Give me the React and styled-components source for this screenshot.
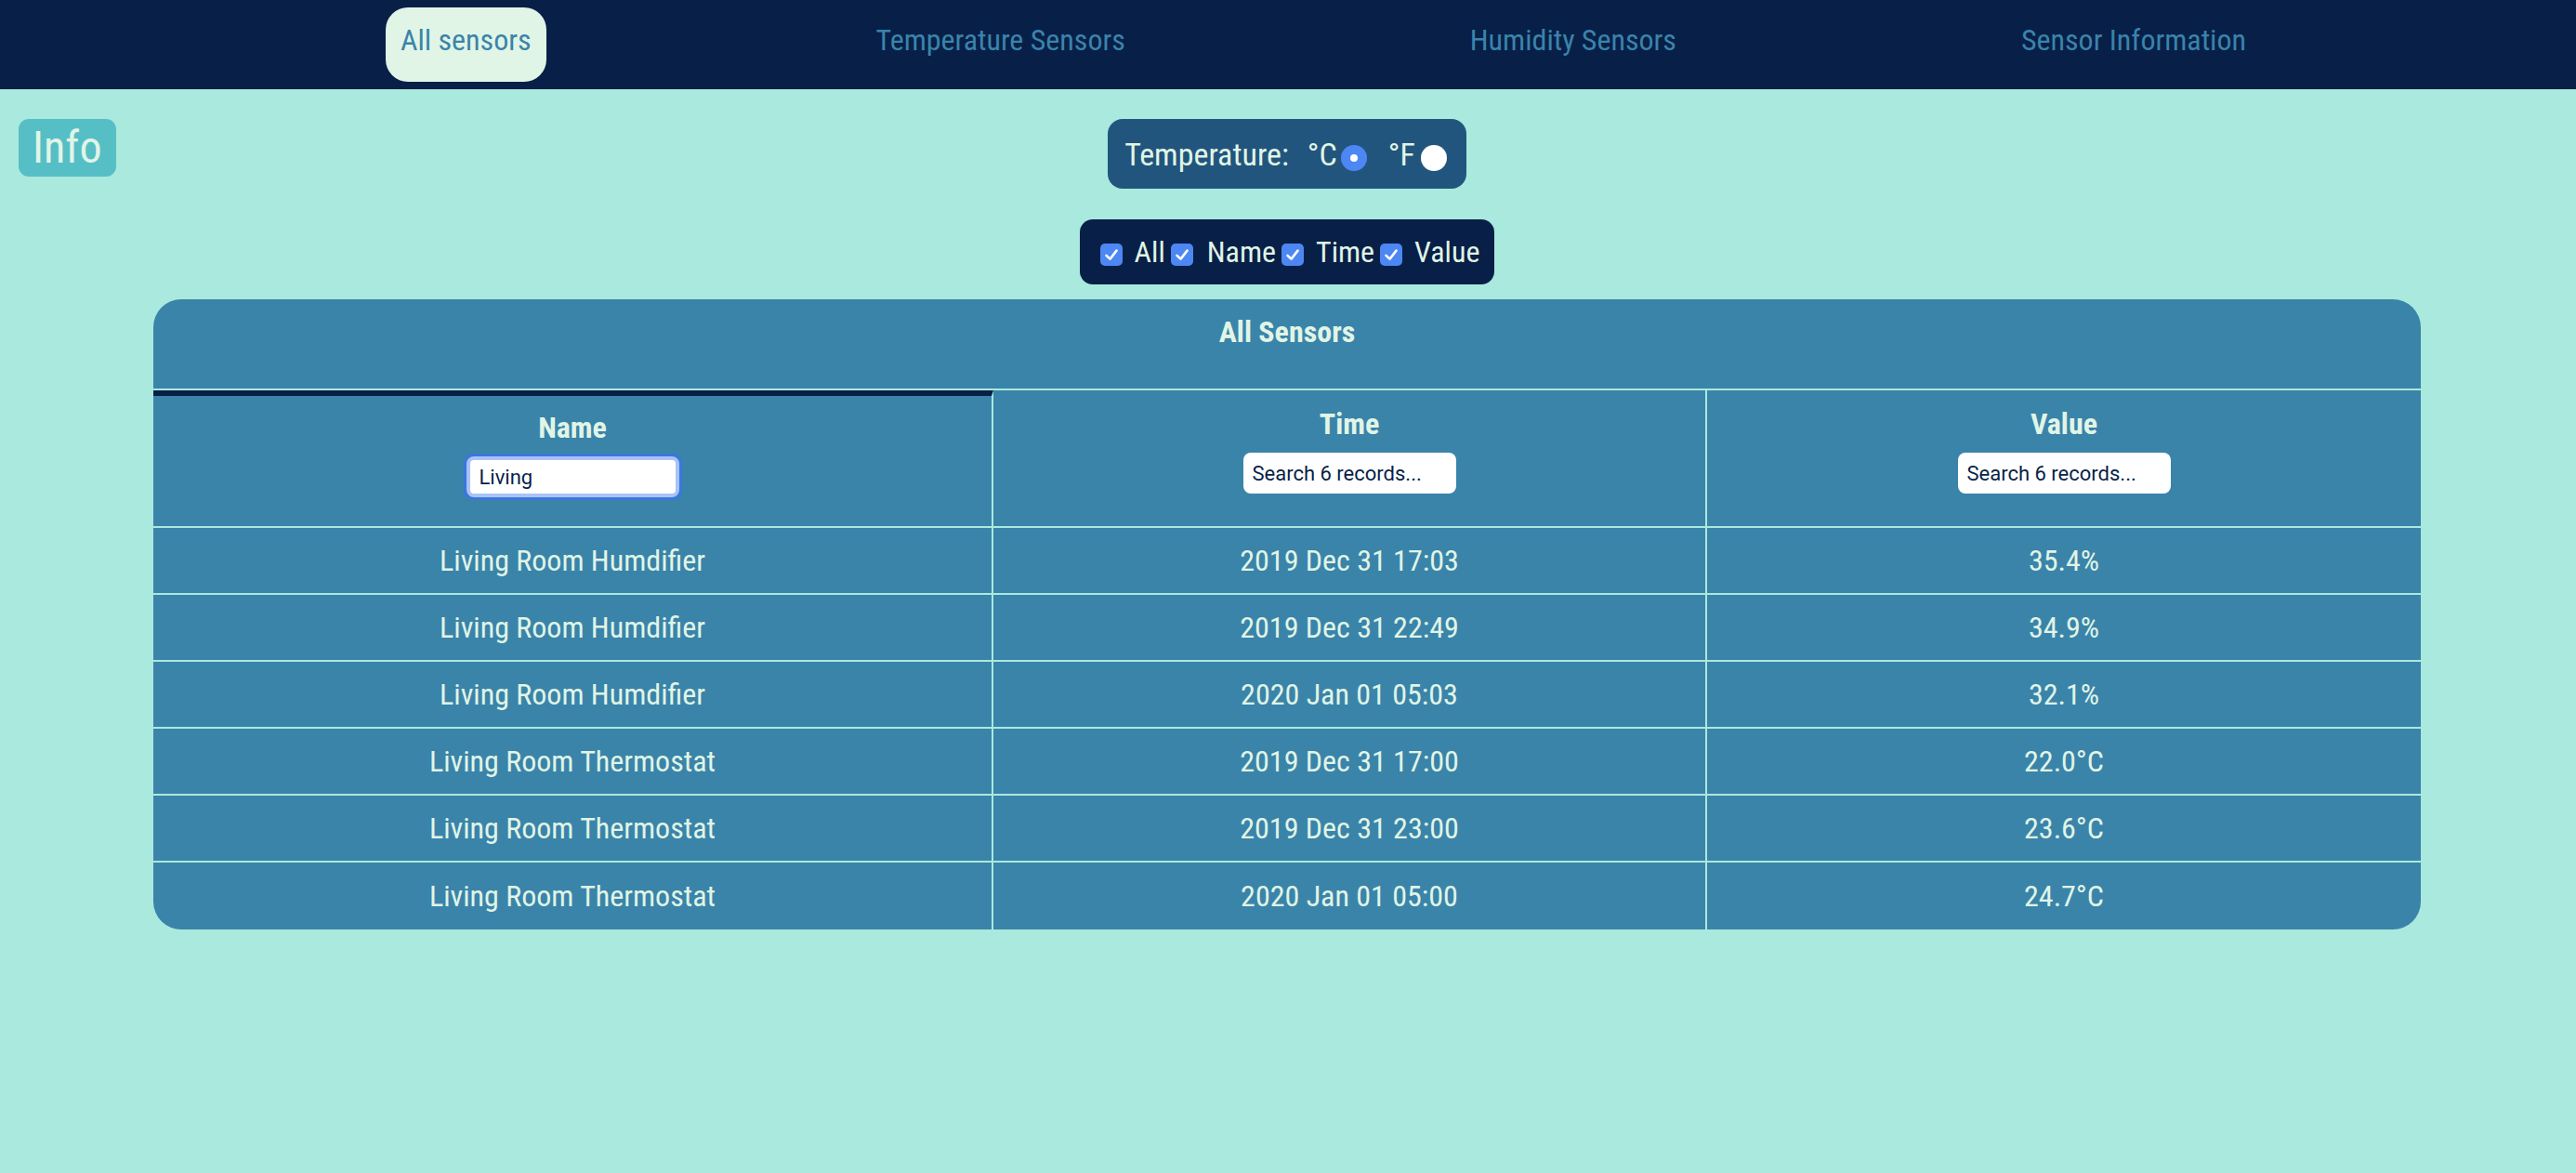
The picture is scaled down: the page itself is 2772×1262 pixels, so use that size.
import React from 'react';
import styled, { createGlobalStyle } from 'styled-components';

const GlobalStyle = createGlobalStyle`
  body {
    margin: 0;
    background-color: #aae9dd;
    font-family: "Roboto Condensed", "Roboto", sans-serif;
    font-stretch: condensed;
  }
  * {
    box-sizing: border-box;
  }
`;

const Page = styled.div`
  min-height: 100vh;
  background-color: #aae9dd;
  color: #e0f5e6;
`;

const NavBar = styled.nav`
  height: 96px;
  background-color: #081f48;
  display: flex;
  justify-content: space-evenly;
  align-items: flex-start;
  padding: 8px 0 0 76px;
`;

const NavItem = styled.a`
  padding: 17px 16px 27px;
  border-radius: 24px;
  font-size: 32px;
  line-height: 36px;
  color: #3a84aa;
  text-decoration: none;
  white-space: nowrap;
  background-color: ${(p) => (p.$active ? '#e0f5e6' : 'transparent')};
`;

const Main = styled.main`
  padding: 32px 20px 40px 18px;
`;

const Toolbar = styled.div`
  display: grid;
  grid-template-columns: 1fr auto 1fr;
  align-items: start;
`;

const InfoBadge = styled.button`
  justify-self: start;
  margin-left: 2px;
  border: none;
  border-radius: 11px;
  padding: 3px 15px;
  background-color: #56bfc6;
  color: #e0f5e6;
  font-family: inherit;
  font-stretch: condensed;
  font-size: 48px;
  font-weight: 400;
  line-height: 56px;
`;

const Controls = styled.div`
  display: flex;
  flex-direction: column;
  align-items: center;
  gap: 33px;
`;

const UnitBox = styled.div`
  display: flex;
  align-items: center;
  height: 75px;
  padding: 0 21px 0 18px;
  border-radius: 16px;
  background-color: #22557e;
  font-size: 34px;
`;

const UnitLabel = styled.span`
  margin-left: ${(p) => p.$gap || 0}px;
`;

const Radio = styled.span`
  width: 28px;
  height: 28px;
  margin: 9px 0 0 ${(p) => p.$gap}px;
  border-radius: 50%;
  background-color: ${(p) => (p.$checked ? '#4d87f3' : '#ffffff')};
  display: flex;
  align-items: center;
  justify-content: center;

  &::after {
    content: '';
    width: 8px;
    height: 8px;
    border-radius: 50%;
    background-color: #ffffff;
    display: ${(p) => (p.$checked ? 'block' : 'none')};
  }
`;

const ColumnBox = styled.div`
  display: flex;
  align-items: center;
  gap: 6px;
  height: 70px;
  padding: 0 16px 0 22px;
  border-radius: 14px;
  background-color: #081f48;
  font-size: 32px;
`;

const ColumnToggle = styled.label`
  display: flex;
  align-items: center;
`;

const CheckBox = styled.span`
  width: 24px;
  height: 24px;
  margin-top: 5px;
  border-radius: 5px;
  background-color: #4d87f3;
  display: flex;
  align-items: center;
  justify-content: center;
`;

const ToggleText = styled.span`
  padding-left: ${(p) => p.$gap}px;
`;

const TableCard = styled.section`
  width: 2440px;
  margin: 16px auto 0;
  border-radius: 30px;
  overflow: hidden;
  background-color: #3a84aa;
`;

const Caption = styled.div`
  height: 98px;
  padding-top: 16px;
  border-bottom: 2px solid #aae9dd;
  text-align: center;
  font-size: 32px;
  font-weight: 700;
  line-height: 38px;
`;

const Table = styled.table`
  width: 100%;
  table-layout: fixed;
  border-collapse: separate;
  border-spacing: 0;
`;

const HeadCell = styled.th`
  width: ${(p) => p.$width}px;
  vertical-align: top;
  padding: ${(p) => (p.$sorted ? '15px 0 31px' : '17px 0 35px')};
  border-top: ${(p) => (p.$sorted ? '6px solid #081f48' : 'none')};
  border-right: 2px solid #aae9dd;
  border-bottom: 2px solid #aae9dd;
  font-size: 32px;
  font-weight: 700;
  line-height: 38px;

  &:last-child {
    border-right: none;
  }
`;

const HeadLabel = styled.div`
  margin-bottom: 12px;
`;

const Filter = styled.input`
  display: block;
  width: 229px;
  height: 44px;
  margin: 0 auto;
  padding: 0 10px;
  border-radius: 8px;
  border: ${(p) => (p.$focused ? '4px solid #a9c3f5' : 'none')};
  box-shadow: ${(p) => (p.$focused ? '0 0 0 3px #3a77dc' : 'none')};
  outline: none;
  background-color: #ffffff;
  color: #081f48;
  font-family: "Roboto", sans-serif;
  font-stretch: normal;
  font-size: 22px;

  &::placeholder {
    color: #081f48;
    opacity: 1;
  }
`;

const Cell = styled.td`
  height: 72px;
  padding: 0;
  text-align: center;
  font-size: 32px;
  line-height: 70px;
  border-right: 2px solid #aae9dd;
  border-bottom: 2px solid #aae9dd;

  &:last-child {
    border-right: none;
  }

  tr:last-child > & {
    border-bottom: none;
  }
`;

const navLinks = ['All sensors', 'Temperature Sensors', 'Humidity Sensors', 'Sensor Information'];

const columns = [
  { key: 'name', title: 'Name', width: 904 },
  { key: 'time', title: 'Time', width: 768 },
  { key: 'value', title: 'Value', width: 768 },
];

const readings = [
  { name: 'Living Room Humdifier', time: '2019 Dec 31 17:03', value: '35.4%' },
  { name: 'Living Room Humdifier', time: '2019 Dec 31 22:49', value: '34.9%' },
  { name: 'Living Room Humdifier', time: '2020 Jan 01 05:03', value: '32.1%' },
  { name: 'Living Room Thermostat', time: '2019 Dec 31 17:00', value: '22.0°C' },
  { name: 'Living Room Thermostat', time: '2019 Dec 31 23:00', value: '23.6°C' },
  { name: 'Living Room Thermostat', time: '2020 Jan 01 05:00', value: '24.7°C' },
];

const toggles = [
  { label: 'All', gap: 13 },
  { label: 'Name', gap: 15 },
  { label: 'Time', gap: 13 },
  { label: 'Value', gap: 13 },
];

const Check = () => (
  <svg width="22" height="22" viewBox="0 0 16 16">
    <polyline points="4,8.6 6.9,11.4 12,4.8" fill="none" stroke="#ffffff" strokeWidth="1.9" strokeLinecap="round" strokeLinejoin="round" />
  </svg>
);

const App = () => {
  return (
    <Page>
      <GlobalStyle />
      <NavBar>
        {navLinks.map((link, i) => (
          <NavItem key={link} href="#" $active={i === 0}>
            {link}
          </NavItem>
        ))}
      </NavBar>
      <Main>
        <Toolbar>
          <InfoBadge>Info</InfoBadge>
          <Controls>
            <UnitBox>
              <UnitLabel>Temperature:</UnitLabel>
              <UnitLabel $gap={20}>°C</UnitLabel>
              <Radio $checked $gap={4} />
              <UnitLabel $gap={23}>°F</UnitLabel>
              <Radio $gap={6} />
            </UnitBox>
            <ColumnBox>
              {toggles.map((t) => (
                <ColumnToggle key={t.label}>
                  <CheckBox>
                    <Check />
                  </CheckBox>
                  <ToggleText $gap={t.gap}>{t.label}</ToggleText>
                </ColumnToggle>
              ))}
            </ColumnBox>
          </Controls>
          <div />
        </Toolbar>

        <TableCard>
          <Caption>All Sensors</Caption>
          <Table>
            <thead>
              <tr>
                {columns.map((col) => (
                  <HeadCell key={col.key} $width={col.width} $sorted={col.key === 'name'}>
                    <HeadLabel>{col.title}</HeadLabel>
                    {col.key === 'name' ? (
                      <Filter $focused defaultValue="Living" />
                    ) : (
                      <Filter placeholder="Search 6 records..." />
                    )}
                  </HeadCell>
                ))}
              </tr>
            </thead>
            <tbody>
              {readings.map((r, i) => (
                <tr key={i}>
                  <Cell>{r.name}</Cell>
                  <Cell>{r.time}</Cell>
                  <Cell>{r.value}</Cell>
                </tr>
              ))}
            </tbody>
          </Table>
        </TableCard>
      </Main>
    </Page>
  );
};

export default App;
